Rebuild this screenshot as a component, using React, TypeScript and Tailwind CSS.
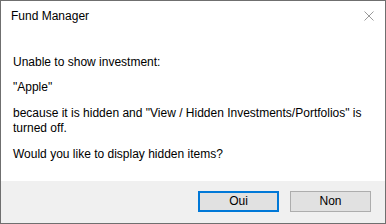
import React from "react";

export default function App() {
  return (
    <div
      className="w-[386px] h-[224px] flex flex-col border border-[#6f6f6f] bg-white text-[12px] text-black"
      style={{ fontFamily: '"Liberation Sans", Arial, sans-serif' }}
    >
      <div className="h-[30px] flex items-center justify-between pl-[10px] pr-[10px] shrink-0">
        <span className="leading-[15px]">Fund Manager</span>
        <svg width="10" height="10" viewBox="0 0 10 10" className="mr-[1px]">
          <path d="M0.5 0.5 L9.5 9.5 M9.5 0.5 L0.5 9.5" stroke="#9a9a9a" strokeWidth="1" />
        </svg>
      </div>
      <div className="flex-1 pl-[12px] pt-[24px] leading-[15px]">
        <p className="mb-[10px]">Unable to show investment:</p>
        <p className="mb-[11px]">"Apple"</p>
        <p className="mb-[11px]">
          because it is hidden and "View / Hidden Investments/Portfolios" is turned off.
        </p>
        <p>Would you like to display hidden items?</p>
      </div>
      <div className="h-[42px] shrink-0 bg-[#f0f0f0] flex items-start justify-end gap-[11px] pr-[14px] pt-[10px]">
        <button className="w-[81px] h-[21px] bg-[#e1e1e1] border-2 border-[#0078d7] leading-[15px]">
          Oui
        </button>
        <button className="w-[81px] h-[21px] bg-[#e1e1e1] border border-[#adadad] leading-[15px]">
          Non
        </button>
      </div>
    </div>
  );
}
